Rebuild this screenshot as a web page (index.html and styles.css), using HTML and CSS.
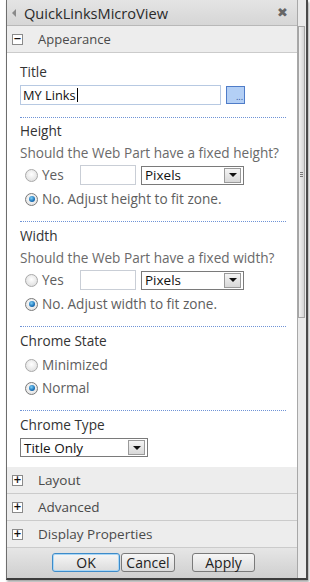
FILE: index.html
```html
<!DOCTYPE html>
<html>
<head>
<meta charset="utf-8">
<link rel="stylesheet" href="styles.css">
</head>
<body>
<div class="frame">
  <div class="panel">
    <div class="titlebar">
      <span class="tri"></span>
      <span class="ttl">QuickLinksMicroView</span>
      <span class="close">&#x2716;</span>
    </div>
    <div class="hdr open"><span class="box">&minus;</span><span class="hname">Appearance</span></div>
    <div class="content">
      <div class="sec first">
        <div class="lbl">Title</div>
        <div class="row-title">
          <div class="tinput">MY Links<span class="caret"></span></div>
          <div class="dots">...</div>
        </div>
      </div>
      <div class="sec">
        <div class="lbl">Height</div>
        <div class="q">Should the Web Part have a fixed height?</div>
        <div class="yesrow">
          <span class="radio"></span><span class="rt yes">Yes</span>
          <span class="sinput"></span>
          <span class="select wide"><span class="sv">Pixels</span><span class="arr"></span></span>
        </div>
        <div class="rrow"><span class="radio on"></span><span class="rt">No. Adjust height to fit zone.</span></div>
      </div>
      <div class="sec">
        <div class="lbl">Width</div>
        <div class="q">Should the Web Part have a fixed width?</div>
        <div class="yesrow">
          <span class="radio"></span><span class="rt yes">Yes</span>
          <span class="sinput"></span>
          <span class="select wide"><span class="sv">Pixels</span><span class="arr"></span></span>
        </div>
        <div class="rrow"><span class="radio on"></span><span class="rt">No. Adjust width to fit zone.</span></div>
      </div>
      <div class="sec">
        <div class="lbl">Chrome State</div>
        <div class="rrow st1"><span class="radio"></span><span class="rt">Minimized</span></div>
        <div class="rrow st2"><span class="radio on"></span><span class="rt">Normal</span></div>
      </div>
      <div class="sec last">
        <div class="lbl">Chrome Type</div>
        <div class="ctrow"><span class="select narrow"><span class="sv">Title Only</span><span class="arr"></span></span></div>
      </div>
    </div>
    <div class="hdr"><span class="box">+</span><span class="hname">Layout</span></div>
    <div class="hdr"><span class="box">+</span><span class="hname">Advanced</span></div>
    <div class="hdr"><span class="box">+</span><span class="hname">Display Properties</span></div>
    <div class="btnbar">
      <span class="btn ok">OK</span>
      <span class="btn cancel">Cancel</span>
      <span class="btn apply">Apply</span>
    </div>
  </div>
  <div class="scroll">
    <div class="thumb"><span class="grip"></span></div>
  </div>
</div>
</body>
</html>
```
FILE: styles.css
```css
html, body {
  margin: 0;
  padding: 0;
  background: #ffffff;
}
body {
  font-family: "Open Sans", "DejaVu Sans", sans-serif;
  width: 310px;
  height: 582px;
  overflow: hidden;
}
.frame {
  margin-left: 6px;
  width: 302px;
  height: 580px;
  box-sizing: border-box;
  display: flex;
  border-left: 1px solid #6e6e6e;
  border-right: 2px solid #4a4a4a;
  border-bottom: 2px solid #3c3c3c;
  box-shadow: 1px 2px 2px rgba(0,0,0,0.35);
}
.panel {
  width: 290px;
  display: flex;
  flex-direction: column;
  border-right: 1px solid #a8a8a8;
  background: #fff;
}
.titlebar {
  height: 25px;
  flex: none;
  border-bottom: 1px solid #b8b8b8;
  background: linear-gradient(#e4e4e4, #d6d6d6);
  display: flex;
  align-items: center;
  padding-left: 5px;
}
.tri {
  width: 0;
  height: 0;
  border-top: 4px solid transparent;
  border-bottom: 4px solid transparent;
  border-right: 4px solid #8a8a8a;
  margin-right: 8px;
}
.ttl {
  font-size: 14.6px;
  color: #2a2a2a;
  flex: 1;
}
.close {
  font-size: 13px;
  color: #666;
  margin-right: 9px;
  font-family: "DejaVu Sans", sans-serif;
}
.hdr {
  height: 26px;
  flex: none;
  border-bottom: 1px solid #cbcbcb;
  background: #ededed;
  display: flex;
  align-items: center;
  padding-left: 5px;
}
.box {
  width: 9px;
  height: 9px;
  border: 1px solid #8a8a8a;
  background: #fff;
  font-size: 10px;
  line-height: 8px;
  text-align: center;
  color: #111;
  font-family: "DejaVu Sans", sans-serif;
  font-weight: bold;
  margin-right: 15px;
}
.hname {
  font-size: 13.5px;
  color: #4a4a4a;
}
.hdr.open .hname {
  font-size: 13px;
}
.content {
  flex: 1;
  min-height: 0;
  overflow: hidden;
  padding: 11px 11px 0 13px;
  font-size: 13.6px;
}
.sec {
  border-bottom: 1px dotted #6f93d6;
  padding-bottom: 14px;
  margin-bottom: 6px;
}
.sec.first {
  padding-bottom: 12px;
  margin-bottom: 5px;
}
.sec.last {
  border-bottom: none;
  padding-bottom: 0;
  margin-bottom: 0;
}
.lbl {
  line-height: 16px;
  color: #333;
}
.row-title {
  margin-top: 5px;
  display: flex;
  align-items: center;
}
.tinput {
  width: 197px;
  height: 18px;
  border: 1px solid #b7c9e2;
  font-size: 12.8px;
  line-height: 18px;
  padding-left: 2px;
  color: #111;
  display: flex;
  align-items: center;
  box-sizing: content-box;
}
.caret {
  width: 1px;
  height: 14px;
  background: #000;
  margin-left: 1px;
}
.dots {
  width: 16px;
  height: 16px;
  margin-left: 5px;
  border: 1px solid #4f7cc8;
  background: #b3cff5;
  color: #2c4f96;
  font-size: 9px;
  line-height: 20px;
  text-align: right;
  padding-right: 1px;
  box-sizing: content-box;
}
.q {
  margin-top: 6px;
  line-height: 16px;
  color: #6a6a6a;
}
.yesrow {
  margin-top: 4px;
  height: 20px;
  display: flex;
  align-items: center;
  padding-left: 5px;
}
.radio {
  width: 11px;
  height: 11px;
  border-radius: 50%;
  border: 1px solid #a9a9a9;
  background: radial-gradient(circle at 50% 40%, #ffffff, #d8d8d8);
  box-sizing: content-box;
  display: inline-flex;
  align-items: center;
  justify-content: center;
  flex: none;
}
.radio.on {
  border-color: #7a7a7a;
  background: radial-gradient(circle at 50% 40%, #ffffff, #dcdcdc);
}
.radio.on::after {
  content: "";
  width: 6px;
  height: 6px;
  border-radius: 50%;
  background: radial-gradient(circle at 40% 35%, #7fd0f7, #1b72b8 60%, #0b3f7a);
}
.rt {
  margin-left: 4px;
  color: #5e5e5e;
  line-height: 16px;
}
.rt.yes {
  width: 38px;
}
.sinput {
  width: 54px;
  height: 18px;
  border: 1px solid #c9ced6;
  background: #fff;
}
.select {
  height: 17px;
  border: 1px solid #7a7a7a;
  display: flex;
  align-items: center;
  background: #fff;
  box-sizing: content-box;
}
.select.wide {
  width: 101px;
  margin-left: 5px;
}
.select.narrow {
  width: 126px;
}
.sv {
  flex: 1;
  padding-left: 3px;
  color: #111;
  font-size: 13.5px;
  line-height: 16px;
}
.arr {
  width: 15px;
  height: 13px;
  margin-right: 2px;
  border: 1px solid #9a9a9a;
  background: linear-gradient(#f4f4f4, #d8d8d8);
  display: flex;
  align-items: center;
  justify-content: center;
}
.arr::after {
  content: "";
  width: 0;
  height: 0;
  border-left: 4px solid transparent;
  border-right: 4px solid transparent;
  border-top: 4px solid #111;
}
.rrow {
  margin-top: 6px;
  height: 16px;
  display: flex;
  align-items: center;
  padding-left: 5px;
}
.rrow.st1 {
  margin-top: 8px;
}
.rrow.st2 {
  margin-top: 7px;
}
.ctrow {
  margin-top: 5px;
  display: flex;
}
.btnbar {
  height: 30px;
  flex: none;
  background: linear-gradient(#e6e6e6, #cfcfcf);
  display: flex;
  align-items: center;
  padding-left: 45px;
  padding-bottom: 1px;
  box-sizing: border-box;
}
.btn {
  height: 17px;
  border: 1px solid #7a7a7a;
  border-radius: 3px;
  background: linear-gradient(#f6f6f6, #dcdcdc);
  font-size: 14px;
  line-height: 17px;
  color: #222;
  text-align: center;
}
.btn.ok {
  width: 66px;
  margin-right: 1px;
  border-color: #3d8bc9;
  box-shadow: inset 0 0 0 1px #a9d6f5;
}
.btn.cancel {
  width: 52px;
  margin-right: 17px;
}
.btn.apply {
  width: 61px;
}
.scroll {
  flex: 1;
  background: #eaeaea;
  display: flex;
  flex-direction: column;
}
.thumb {
  margin-top: 26px;
  height: 290px;
  width: 5px;
  border: 1px solid #a5a5a5;
  background: linear-gradient(90deg, #f2f2f2, #d4d4d4);
  display: flex;
  justify-content: center;
}
.grip {
  margin-top: 145px;
  width: 3px;
  height: 6px;
  background: repeating-linear-gradient(#777 0 1px, transparent 1px 2px);
}
```
